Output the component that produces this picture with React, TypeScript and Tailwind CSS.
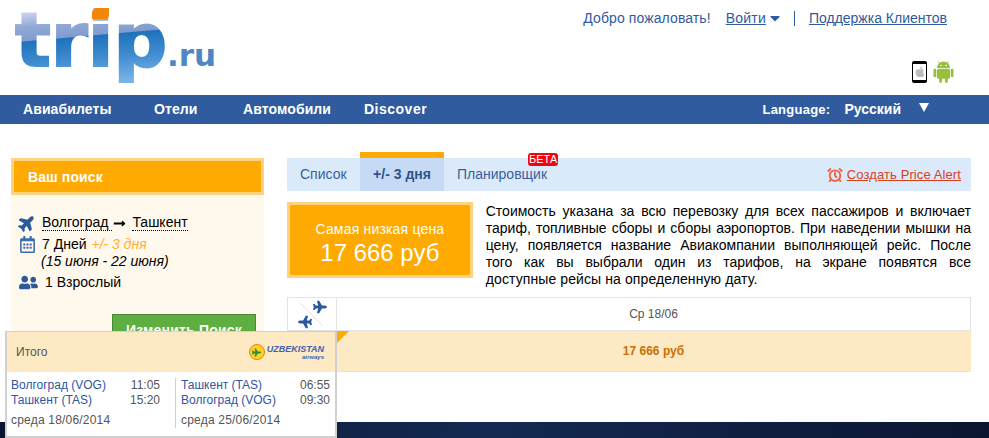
import React from 'react';
import { FaPlane, FaRegCalendarAlt, FaUserFriends, FaApple, FaCaretDown, FaLongArrowAltRight } from 'react-icons/fa';
import { AlarmClock } from 'lucide-react';

const navItems = [
    { label: 'Авиабилеты', className: 'ml-[23px] w-[131px] tracking-[0.1px]' },
    { label: 'Отели', className: 'w-[89px] tracking-[0.1px]' },
    { label: 'Автомобили', className: 'w-[121px] tracking-[0.1px]' },
    { label: 'Discover', className: 'tracking-[0.5px]' },
];

const paragraph = [
    'Стоимость указана за всю перевозку для всех пассажиров и включает',
    'тариф, топливные сборы и сборы аэропортов. При наведении мышки на',
    'цену, появляется название Авиакомпании выполняющей рейс. После',
    'того как вы выбрали один из тарифов, на экране появятся все',
];

const Logo = () => (
    <div className="relative h-[95px] w-[230px] select-none">
        <span className="absolute left-[15px] top-0 pb-[6px] font-['DejaVu_Sans'] text-[75px] font-bold leading-[80px] text-transparent bg-clip-text [-webkit-text-stroke:2px_transparent] bg-[linear-gradient(175deg,#dfe4f4_8%,#93a9d6_28%,#7f9ccf_42%,#1f72bb_43%,#3f8bd0_65%,#76b2e6_90%)]">
            trip
        </span>
        <span className="absolute left-[92px] top-[8px] h-[11px] w-[17px] rounded-tl-[5px] rounded-br-[4px] bg-[#f28705]" />
        <span className="absolute left-[167px] top-[36px] font-['DejaVu_Sans'] text-[31px] font-bold leading-[38px] text-[#4f87c4]">.ru</span>
    </div>
);

const AndroidIcon = () => (
    <svg width="21" height="23" viewBox="0 0 21 23" className="text-[#97c03d]" fill="currentColor">
        <path d="M4 8a6.500 6.500 0 0 1 13 0z" />
        <path d="M5.500 1.500 7 4M15.500 1.500 14 4" stroke="currentColor" strokeWidth="1" />
        <rect x="4" y="8.800" width="13" height="10" rx="1.500" />
        <rect x="0.500" y="8.800" width="2.800" height="8.500" rx="1.400" />
        <rect x="17.700" y="8.800" width="2.800" height="8.500" rx="1.400" />
        <rect x="6.200" y="17" width="2.900" height="6" rx="1.400" />
        <rect x="11.900" y="17" width="2.900" height="6" rx="1.400" />
        <circle cx="8" cy="5.500" r="0.800" fill="#fff" />
        <circle cx="13" cy="5.500" r="0.800" fill="#fff" />
    </svg>
);

const Row = ({ from, to, t1, t2, date }: { from: string; to: string; t1: string; t2: string; date: string }) => (
    <div className="w-[149px]">
        <div className="flex justify-between text-[#2f55a4]">
            <span>{from}</span>
            <span className="text-[#555]">{t1}</span>
        </div>
        <div className="flex justify-between text-[#2f55a4]">
            <span>{to}</span>
            <span className="text-[#555]">{t2}</span>
        </div>
        <div className="mt-[5px] tracking-[0.2px] text-[#555]">{date}</div>
    </div>
);

export default function App() {
    return (
        <div className="relative h-[438px] w-[989px] overflow-hidden bg-white font-['Liberation_Sans',Arial,sans-serif] text-[14px] text-black">
            <header className="flex h-[95px]">
                <Logo />
                <div className="ml-auto mr-[42px] flex flex-col items-end">
                    <div className="mt-[10px] flex h-[16px] items-center text-[#2f5b9e]">
                        <span className="tracking-[0.1px]">Добро пожаловать!</span>
                        <a className="ml-[15px] tracking-[0.2px] underline">Войти</a>
                        <FaCaretDown className="ml-[1px] text-[16px]" />
                        <span className="ml-[11px] h-[15px] w-px bg-[#2f5b9e]" />
                        <a className="ml-[14px] underline">Поддержка Клиентов</a>
                    </div>
                    <div className="mr-[-7px] mt-[34px] flex items-center gap-[6px]">
                        <div className="flex h-[22px] w-[15px] items-center justify-center rounded-[2px] border-y-[3px] border-x-[1px] border-black bg-white">
                            <FaApple className="text-[12px] text-[#bbb]" />
                        </div>
                        <AndroidIcon />
                    </div>
                </div>
            </header>

            <nav className="flex h-[29px] items-center bg-[#305c9f] text-[14px] font-bold text-white">
                {navItems.map((item) => (
                    <a key={item.label} className={item.className}>{item.label}</a>
                ))}
                <span className="ml-auto text-[13px] tracking-[0.25px]">Language:</span>
                <span className="ml-[14px]">Русский</span>
                <span className="ml-[18px] mr-[60px] mb-[5px] h-0 w-0 border-x-[5px] border-t-[9px] border-x-transparent border-t-white" />
            </nav>

            <main className="flex h-[298px] pl-[11px]">
                <aside className="mt-[34px] h-[264px] w-[253px] bg-[#fff8ec]">
                    <div className="flex h-[37px] items-center border-[3px] border-[#ffd27f] bg-[#ffaa00] pl-[14px] pt-[1px] font-bold tracking-[0.1px] text-white">Ваш поиск</div>
                    <div className="pl-[7px] pt-[16px]">
                        <div className="flex h-[24px] items-center">
                            <FaPlane className="-rotate-45 text-[18px] text-[#2a5a9c]" />
                            <span className="ml-[6px] border-b border-dotted border-black pr-[4px] leading-[15px]">Волгоград</span>
                            <FaLongArrowAltRight className="ml-[1px] mr-[6px] text-[13px]" />
                            <span className="border-b border-dotted border-black leading-[15px]">Ташкент</span>
                        </div>
                        <div className="mt-[-1px] flex h-[21px] items-center">
                            <FaRegCalendarAlt className="ml-[1px] text-[17px] text-[#3d6cb0]" />
                            <span className="ml-[6px]">7 Дней</span>
                            <span className="ml-[5px] italic text-[#ffb030]">+/- 3 дня</span>
                        </div>
                        <div className="ml-[23px] h-[17px] italic leading-[13px]">(15 июня - 22 июня)</div>
                        <div className="flex h-[20px] items-center">
                            <FaUserFriends className="ml-[1px] text-[19px] text-[#2a5a9c]" />
                            <span className="ml-[7px]">1 Взрослый</span>
                        </div>
                        <div className="ml-[94px] mt-[22px] flex h-[36px] w-[144px] items-start justify-center border border-[#4a8a36] bg-[#5fae41] pt-[5px] font-bold tracking-[0.2px] text-white">Изменить Поиск</div>
                    </div>
                </aside>

                <section className="ml-[23px] mt-[28px] w-[684px]">
                    <div className="relative mt-[6px] flex h-[33px] items-center bg-[#dbeafb] text-[14px] text-[#3a5f9a]">
                        <span className="w-[73px] pl-[13px]">Список</span>
                        <div className="relative flex h-[33px] w-[84px] items-center justify-center bg-[#c6d9f5] font-bold text-[#2f5288]">
                            <span className="absolute left-0 top-[-6px] h-[6px] w-[84px] bg-[#ffaa00]" />
                            +/- 3 дня
                        </div>
                        <span className="relative ml-[13px]">
                            Планировщик
                            <span className="absolute left-[71px] top-[-11px] rounded-[3px] bg-[#f00511] px-[1px] text-[11px] leading-[13px] text-white">БЕТА</span>
                        </span>
                        <div className="ml-auto mr-[10px] flex items-center">
                            <AlarmClock className="mr-[4px] h-[16px] w-[16px] text-[#f0603c]" strokeWidth={2.8} />
                            <a className="text-[13px] tracking-[0.1px] text-[#d8401c] underline">Создать Price Alert</a>
                        </div>
                    </div>

                    <div className="mt-[11px] flex">
                        <div className="flex h-[76px] w-[186px] flex-col items-center border-[3px] border-[#ffd27f] bg-[#ffaa00] pt-[16px] text-white">
                            <span className="text-[14px] leading-[16px] tracking-[0.18px]">Самая низкая цена</span>
                            <span className="text-[24px] leading-[32px]">17 666 руб</span>
                        </div>
                        <div className="ml-[13px] mt-[1px] w-[486px] text-[14px] leading-[17px]">
                            {paragraph.map((line) => (
                                <p key={line} className="[text-align-last:justify]">{line}</p>
                            ))}
                            <p className="tracking-[0.1px]">доступные рейсы на определенную дату.</p>
                        </div>
                    </div>

                    <div className="mt-[9px] w-[684px]">
                        <div className="flex h-[34px] border border-[#e3e3e3]">
                            <div className="relative h-full w-[49px] border-r border-[#e3e3e3]">
                                <svg width="48" height="32" viewBox="0 0 48 32" className="absolute left-0 top-0">
                                    <line x1="12" y1="5" x2="35" y2="28" stroke="#e3e3e3" strokeWidth="1" />
                                </svg>
                                <FaPlane className="absolute left-[25px] top-[2px] text-[14px] text-[#2a5a9c]" />
                                <FaPlane className="absolute left-[10px] top-[17px] rotate-180 text-[14px] text-[#2a5a9c]" />
                            </div>
                            <div className="flex flex-1 items-center justify-center text-[12px] text-[#555]">Ср 18/06</div>
                        </div>
                        <div className="relative flex h-[41px] items-center justify-center border-b border-[#e3e3e3] bg-[#fde9c4] pl-[49px] text-[12px] font-bold text-[#cc7000]">
                            <span className="absolute left-[50px] top-0 h-0 w-0 border-r-[12px] border-t-[12px] border-r-transparent border-t-[#ffaa00]" />
                            17 666 руб
                        </div>
                    </div>
                </section>
            </main>

            <footer className="h-[16px] bg-[linear-gradient(90deg,#0b1530,#142a52_50%,#0b1530)]" />

            <div className="absolute left-[5px] top-[331px] h-[107px] w-[332px] border-2 border-t border-[#d0d0d0] bg-white text-[12px]">
                <div className="flex h-[40px] items-center justify-between bg-[#fde9c4] pl-[9px] pr-[11px] text-[#555]">
                    <span>Итого</span>
                    <div className="flex items-center">
                        <div className="flex h-[16px] w-[16px] items-center justify-center rounded-full border border-[#e08a00] bg-[#ffd028]">
                            <FaPlane className="text-[9px] text-[#2f8a3a]" />
                        </div>
                        <div className="ml-[2px] flex flex-col items-end font-bold italic text-[#3f62ae]">
                            <span className="text-[9px] leading-[10px]">UZBEKISTAN</span>
                            <span className="text-[6px] leading-[7px]">airways</span>
                        </div>
                    </div>
                </div>
                <div className="mt-[5px] flex pl-[4px] leading-[15px]">
                    <div className="mt-[1px] w-[164px]"><Row from="Волгоград (VOG)" to="Ташкент (TAS)" t1="11:05" t2="15:20" date="среда 18/06/2014" /></div>
                    <div className="mt-[1px] w-[156px] border-l border-[#d0d0d0] pl-[5px]"><Row from="Ташкент (TAS)" to="Волгоград (VOG)" t1="06:55" t2="09:30" date="среда 25/06/2014" /></div>
                </div>
            </div>
        </div>
    );
}
